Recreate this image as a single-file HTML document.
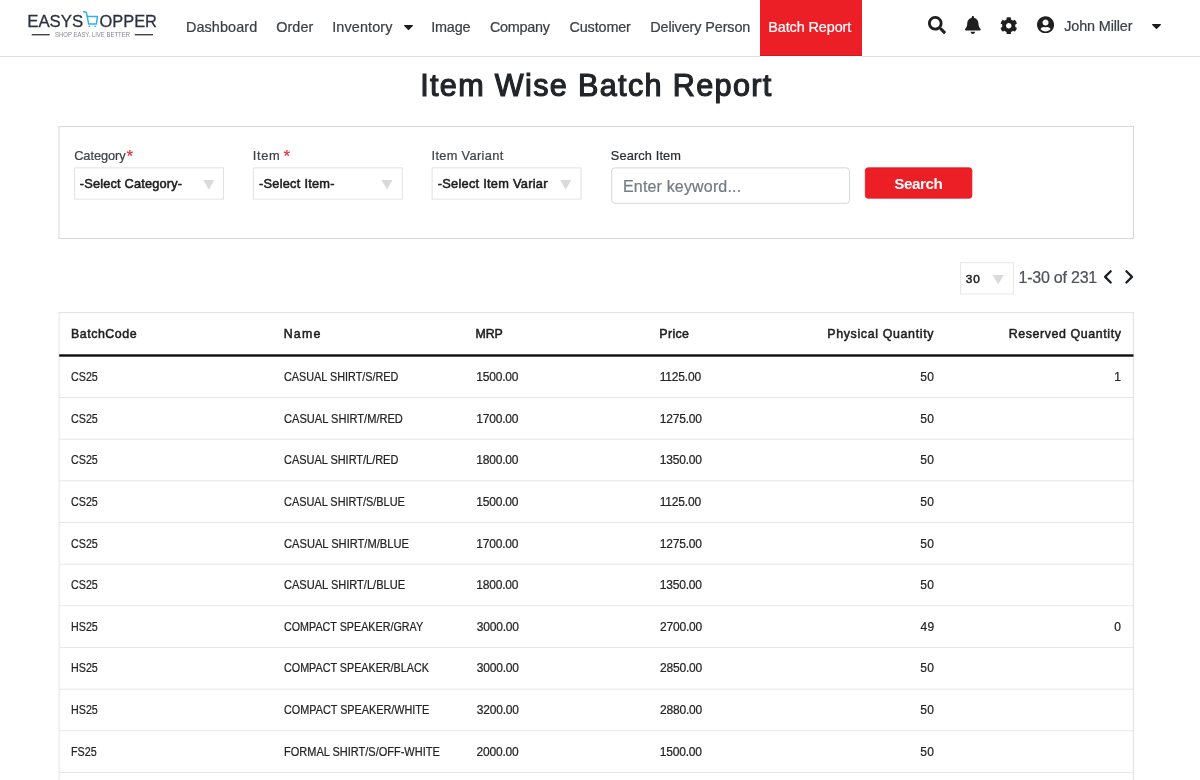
<!DOCTYPE html>
<html lang="en">
<head>
<meta charset="utf-8">
<title>Item Wise Batch Report</title>
<style>
*{box-sizing:border-box;margin:0;padding:0}
html,body{width:1200px;height:780px;overflow:hidden;background:#fff}
body{font-family:"Liberation Sans", sans-serif;color:#212529;position:relative}
.t{position:absolute;white-space:nowrap}
.a{position:absolute}
</style>
</head>
<body>
<div id="page" style="position:absolute;left:0;top:0;width:1200px;height:780px;will-change:transform">
<svg class="a" style="left:0;top:0" width="1200" height="780" viewBox="0 0 1200 780">
<rect x="0.00" y="56.00" width="760.00" height="0.90" fill="#d9dbdf"/>
<rect x="862.00" y="56.00" width="338.00" height="0.90" fill="#d9dbdf"/>
<rect x="760.00" y="0.00" width="102.00" height="56.00" fill="#ec1f27"/>
<rect x="760.00" y="55.10" width="102.00" height="0.90" fill="#cf1b22"/>
<rect x="59.00" y="126.50" width="1074.50" height="112.00" rx="0" fill="#fff" stroke="#d6d6d6" stroke-width="1"/>
<rect x="74.60" y="167.90" width="148.90" height="31.20" rx="0" fill="#fff" stroke="#dedede" stroke-width="0.9"/>
<path d="M203.30 180 h11 l-5.5 9.6z" fill="#d9d9d9"/>
<rect x="253.35" y="167.90" width="148.90" height="31.20" rx="0" fill="#fff" stroke="#dedede" stroke-width="0.9"/>
<path d="M381.45 180 h11 l-5.5 9.6z" fill="#d9d9d9"/>
<rect x="432.10" y="167.90" width="148.90" height="31.20" rx="0" fill="#fff" stroke="#dedede" stroke-width="0.9"/>
<path d="M560.20 180 h11 l-5.5 9.6z" fill="#d9d9d9"/>
<rect x="611.70" y="167.90" width="237.80" height="35.40" rx="3.2" fill="#fff" stroke="#cdd1d6" stroke-width="0.9"/>
<rect x="865.3" y="167.8" width="106.6" height="30.4" rx="2.8" fill="#ec1f27" stroke="#dc1c24" stroke-width=".8"/>
<rect x="960.60" y="262.70" width="52.70" height="31.20" rx="0" fill="#fff" stroke="#e5e5e5" stroke-width="0.9"/>
<path d="M992.5 275.1 h11.4 l-5.7 9.2z" fill="#dadada"/>
<g fill="none" stroke="#1b1f24" stroke-width="2.3" stroke-linecap="round" stroke-linejoin="round"><path d="M1110.7 271.3 L1105.1 276.9 L1110.7 282.5"/><path d="M1126.4 271.3 L1132 276.9 L1126.4 282.5"/></g>
<rect x="58.60" y="312.20" width="1075.10" height="0.90" fill="#dddddd"/>
<rect x="58.60" y="312.20" width="0.90" height="467.80" fill="#e0e0e0"/>
<rect x="1132.90" y="312.20" width="0.90" height="467.80" fill="#dcdcdc"/>
<rect x="59.20" y="354.30" width="1074.30" height="2.40" fill="#0d0d0d"/>
<rect x="59.50" y="397.08" width="1073.50" height="0.85" fill="#e1e3e6"/>
<rect x="59.50" y="438.74" width="1073.50" height="0.85" fill="#e1e3e6"/>
<rect x="59.50" y="480.40" width="1073.50" height="0.85" fill="#e1e3e6"/>
<rect x="59.50" y="522.06" width="1073.50" height="0.85" fill="#e1e3e6"/>
<rect x="59.50" y="563.72" width="1073.50" height="0.85" fill="#e1e3e6"/>
<rect x="59.50" y="605.38" width="1073.50" height="0.85" fill="#e1e3e6"/>
<rect x="59.50" y="647.04" width="1073.50" height="0.85" fill="#e1e3e6"/>
<rect x="59.50" y="688.70" width="1073.50" height="0.85" fill="#e1e3e6"/>
<rect x="59.50" y="730.36" width="1073.50" height="0.85" fill="#e1e3e6"/>
<rect x="59.50" y="772.02" width="1073.50" height="0.85" fill="#e1e3e6"/>
</svg>
<svg class="a" style="left:0;top:0" width="170" height="50" viewBox="0 0 170 50">
<g font-family="Liberation Sans, sans-serif" font-size="17.1" fill="#2c3040" stroke="#2c3040" stroke-width=".28">
<text x="27.2" y="26.5" textLength="56" lengthAdjust="spacingAndGlyphs">EASYS</text>
<text x="99.4" y="26.5" textLength="57.6" lengthAdjust="spacingAndGlyphs">OPPER</text>
</g>
<path d="M83.5 11.7 L86.3 12.2 L88.7 24.1 L96.4 24.1 L97.4 16.6 L87.3 16.6" fill="none" stroke="#35b0e6" stroke-width="1.5" stroke-linecap="round" stroke-linejoin="round"/>
<circle cx="89.4" cy="26.3" r=".85" fill="#35b0e6"/><circle cx="95.2" cy="26.3" r=".85" fill="#35b0e6"/>
<rect x="31.7" y="34" width="18" height="1.4" fill="#3f4350"/>
<rect x="134.7" y="34" width="18.3" height="1.4" fill="#3f4350"/>
<text x="55" y="36.5" font-family="Liberation Sans, sans-serif" font-size="6.3" fill="#85888f" textLength="75" lengthAdjust="spacingAndGlyphs">SHOP EASY. LIVE BETTER</text>
</svg>
<svg class="a" style="left:928.2px;top:16.4px" width="17.9" height="17.9" viewBox="0 0 512 512"><path fill="#1f1f1f" d="M505 442.7L405.3 343c-4.500-4.500-10.600-7-17-7H372c27.600-35.300 44-79.700 44-128C416 93.100 322.900 0 208 0S0 93.100 0 208s93.100 208 208 208c48.300 0 92.700-16.400 128-44v16.300c0 6.400 2.500 12.500 7 17l99.700 99.700c9.400 9.400 24.600 9.400 33.900 0l28.300-28.300c9.400-9.400 9.400-24.600.1-34zM208 336c-70.700 0-128-57.200-128-128 0-70.700 57.200-128 128-128 70.700 0 128 57.200 128 128 0 70.700-57.200 128-128 128z"/></svg>
<svg class="a" style="left:965.1px;top:16.4px" width="15.7" height="17.9" viewBox="0 0 448 512"><path fill="#1f1f1f" d="M224 512c35.320 0 63.970-28.650 63.970-64H160.030c0 35.350 28.650 64 63.970 64zm215.390-149.710c-19.320-20.760-55.470-51.990-55.470-154.290 0-77.700-54.480-139.900-127.940-155.160V32c0-17.670-14.320-32-31.980-32s-31.980 14.330-31.980 32v20.840C118.560 68.100 64.080 130.300 64.080 208c0 102.300-36.150 133.530-55.470 154.290-6 6.450-8.660 14.160-8.610 21.710.11 16.400 12.980 32 32.100 32h383.800c19.120 0 32-15.600 32.100-32 .05-7.550-2.610-15.270-8.610-21.710z"/></svg>
<svg class="a" style="left:1000.1px;top:16.7px" width="17.5" height="17.5" viewBox="0 0 512 512"><path fill="#1f1f1f" d="M487.400 315.700l-42.600-24.600c4.300-23.200 4.300-47 0-70.200l42.600-24.600c4.900-2.800 7.100-8.600 5.500-14-11.100-35.600-30-67.800-54.700-94.600-3.800-4.100-10-5.100-14.800-2.300L380.800 110c-17.900-15.400-38.500-27.300-60.800-35.100V25.800c0-5.600-3.900-10.500-9.400-11.700-36.700-8.200-74.300-7.800-109.200 0-5.500 1.200-9.400 6.100-9.400 11.700V75c-22.200 7.900-42.800 19.800-60.800 35.100L88.700 85.500c-4.900-2.800-11-1.900-14.800 2.300-24.700 26.700-43.600 58.900-54.700 94.600-1.700 5.400.6 11.200 5.500 14L67.300 221c-4.300 23.200-4.300 47 0 70.200l-42.600 24.600c-4.900 2.800-7.100 8.600-5.500 14 11.100 35.600 30 67.800 54.700 94.600 3.800 4.100 10 5.100 14.800 2.300l42.600-24.600c17.900 15.400 38.500 27.300 60.800 35.100v49.200c0 5.600 3.900 10.500 9.400 11.700 36.700 8.200 74.300 7.800 109.200 0 5.500-1.200 9.400-6.100 9.400-11.700v-49.200c22.200-7.900 42.800-19.800 60.800-35.100l42.600 24.600c4.900 2.800 11 1.900 14.800-2.300 24.700-26.700 43.600-58.900 54.700-94.600 1.500-5.500-.7-11.300-5.600-14.100zM256 336c-44.100 0-80-35.900-80-80s35.900-80 80-80 80 35.900 80 80-35.900 80-80 80z"/></svg>
<svg class="a" style="left:1036.9px;top:15.6px" width="17.1" height="17.6" viewBox="0 0 496 512"><path fill="#1f1f1f" d="M248 8C111 8 0 119 0 256s111 248 248 248 248-111 248-248S385 8 248 8zm0 96c48.600 0 88 39.400 88 88s-39.400 88-88 88-88-39.400-88-88 39.400-88 88-88zm0 344c-58.700 0-111.300-26.600-146.500-68.200 18.800-35.400 55.600-59.800 98.500-59.800 2.400 0 4.800.4 7.100 1.100 13 4.200 26.600 6.900 40.900 6.900 14.300 0 28-2.700 40.900-6.900 2.300-.7 4.700-1.100 7.100-1.100 42.900 0 79.700 24.400 98.500 59.800C359.300 421.400 306.700 448 248 448z"/></svg>
<svg class="a" style="left:403.6px;top:24.7px" width="9" height="5" viewBox="0 0 9 5"><path fill="#1b1b1b" d="M0.6 0h7.800c.5 0 .8.6.4 1L5 4.700c-.3.3-.7.3-1 0L.2 1C-.2.600.100 0 .6 0z"/></svg>
<svg class="a" style="left:1151.8px;top:23.8px" width="9" height="5" viewBox="0 0 9 5"><path fill="#1b1b1b" d="M0.6 0h7.800c.5 0 .8.6.4 1L5 4.700c-.3.3-.7.3-1 0L.2 1C-.2.600.100 0 .6 0z"/></svg>

<div class="a" style="left:432.5px;top:169px;width:115.6px;height:29px;overflow:hidden"><div class="t" id="s3" style="left:5.25px;top:6px;font-size:12.8px;line-height:18px;-webkit-text-stroke:0.54px #1c1c1c;color:#1c1c1c;letter-spacing:0.259px">-Select Item Variant-</div></div>
<div class="t" id="n1" style="left:186.00px;top:17px;font-size:14.4px;line-height:20px;color:#3b4046;-webkit-text-stroke:0.22px #3b4046;letter-spacing:0.094px;">Dashboard</div>
<div class="t" id="n2" style="left:276.25px;top:17px;font-size:14.4px;line-height:20px;color:#3b4046;-webkit-text-stroke:0.22px #3b4046;letter-spacing:0.062px;">Order</div>
<div class="t" id="n3" style="left:332.25px;top:17px;font-size:14.4px;line-height:20px;color:#3b4046;-webkit-text-stroke:0.22px #3b4046;letter-spacing:0.125px;">Inventory</div>
<div class="t" id="n4" style="left:431.25px;top:17px;font-size:14.4px;line-height:20px;color:#3b4046;-webkit-text-stroke:0.22px #3b4046;letter-spacing:-0.188px;">Image</div>
<div class="t" id="n5" style="left:490.00px;top:17px;font-size:14.4px;line-height:20px;color:#3b4046;-webkit-text-stroke:0.22px #3b4046;letter-spacing:-0.292px;">Company</div>
<div class="t" id="n6" style="left:569.50px;top:17px;font-size:14.4px;line-height:20px;color:#3b4046;-webkit-text-stroke:0.22px #3b4046;letter-spacing:-0.143px;">Customer</div>
<div class="t" id="n7" style="left:650.25px;top:17px;font-size:14.4px;line-height:20px;color:#3b4046;-webkit-text-stroke:0.22px #3b4046;letter-spacing:-0.107px;">Delivery Person</div>
<div class="t" id="n8" style="left:768.25px;top:17px;font-size:14.4px;line-height:20px;color:#ffffff;-webkit-text-stroke:0.22px #ffffff;letter-spacing:-0.091px;">Batch Report</div>
<div class="t" id="n9" style="left:1064.25px;top:16px;font-size:14.4px;line-height:20px;color:#3b4046;-webkit-text-stroke:0.22px #3b4046;letter-spacing:-0.135px;">John Miller</div>
<div class="t" id="title" style="left:420.18px;top:63px;font-size:30.6px;line-height:43px;color:#212529;-webkit-text-stroke:1.15px #212529;letter-spacing:1.336px;transform:translateY(.5px);">Item Wise Batch Report</div>
<div class="t" id="l1" style="left:74.15px;top:147px;font-size:12.8px;line-height:18px;color:#3f4449;-webkit-text-stroke:0.22px #3f4449;letter-spacing:-0.057px;">Category</div>
<div class="t" id="l2" style="left:252.65px;top:147px;font-size:12.8px;line-height:18px;color:#3f4449;-webkit-text-stroke:0.22px #3f4449;letter-spacing:0.750px;">Item</div>
<div class="t" id="a1" style="left:126.60px;top:147px;font-size:17px;line-height:20px;color:#e2303a;-webkit-text-stroke:0.22px #e2303a;">*</div>
<div class="t" id="a2" style="left:283.60px;top:147px;font-size:17px;line-height:20px;color:#e2303a;-webkit-text-stroke:0.22px #e2303a;">*</div>
<div class="t" id="l3" style="left:431.50px;top:147px;font-size:12.8px;line-height:18px;color:#3f4449;-webkit-text-stroke:0.22px #3f4449;letter-spacing:0.336px;">Item Variant</div>
<div class="t" id="l4" style="left:610.75px;top:147px;font-size:12.8px;line-height:18px;color:#2a2d31;-webkit-text-stroke:0.22px #2a2d31;letter-spacing:0.125px;">Search Item</div>
<div class="t" id="s1" style="left:79.75px;top:175px;font-size:12.8px;line-height:18px;color:#1c1c1c;-webkit-text-stroke:0.54px #1c1c1c;letter-spacing:0.169px;">-Select Category-</div>
<div class="t" id="s2" style="left:259.00px;top:175px;font-size:12.8px;line-height:18px;color:#1c1c1c;-webkit-text-stroke:0.54px #1c1c1c;letter-spacing:0.250px;">-Select Item-</div>
<div class="t" id="ph" style="left:623.00px;top:176px;font-size:16px;line-height:22px;color:#757b82;-webkit-text-stroke:0.22px #757b82;letter-spacing:0.167px;">Enter keyword...</div>
<div class="t" id="btn" style="left:894.25px;top:173px;font-size:15.2px;line-height:21px;color:#ffffff;font-weight:bold;letter-spacing:-0.450px;">Search</div>
<div class="t" id="p30" style="left:965.75px;top:271px;font-size:11.8px;line-height:17px;color:#1c1c1c;-webkit-text-stroke:0.50px #1c1c1c;letter-spacing:0.900px;">30</div>
<div class="t" id="pg" style="left:1018.50px;top:267px;font-size:16px;line-height:22px;color:#4d5258;-webkit-text-stroke:0.22px #4d5258;letter-spacing:-0.225px;">1-30 of 231</div>
<div class="t" id="h1" style="left:71.00px;top:326px;font-size:12.4px;line-height:17px;color:#1f1f1f;-webkit-text-stroke:0.52px #1f1f1f;letter-spacing:0.531px;">BatchCode</div>
<div class="t" id="h2" style="left:283.75px;top:326px;font-size:12.4px;line-height:17px;color:#1f1f1f;-webkit-text-stroke:0.52px #1f1f1f;letter-spacing:1.167px;">Name</div>
<div class="t" id="h3" style="left:475.50px;top:326px;font-size:12.4px;line-height:17px;color:#1f1f1f;-webkit-text-stroke:0.52px #1f1f1f;letter-spacing:-0.125px;">MRP</div>
<div class="t" id="h4" style="left:659.25px;top:326px;font-size:12.4px;line-height:17px;color:#1f1f1f;-webkit-text-stroke:0.52px #1f1f1f;letter-spacing:0.375px;">Price</div>
<div class="t" id="h5" style="left:827.25px;top:326px;font-size:12.4px;line-height:17px;color:#1f1f1f;-webkit-text-stroke:0.52px #1f1f1f;letter-spacing:0.656px;">Physical Quantity</div>
<div class="t" id="h6" style="left:1008.75px;top:326px;font-size:12.4px;line-height:17px;color:#1f1f1f;-webkit-text-stroke:0.52px #1f1f1f;letter-spacing:0.594px;">Reserved Quantity</div>
<div class="t" id="r0a" style="left:70.75px;top:369px;font-size:12px;line-height:17px;color:#242424;-webkit-text-stroke:0.22px #242424;transform:scaleX(0.8934);transform-origin:0 0;">CS25</div>
<div class="t" id="r0b" style="left:283.50px;top:369px;font-size:12px;line-height:17px;color:#242424;-webkit-text-stroke:0.22px #242424;transform:scaleX(0.9026);transform-origin:0 0;">CASUAL SHIRT/S/RED</div>
<div class="t" id="r0c" style="left:476.25px;top:369px;font-size:12px;line-height:17px;color:#242424;-webkit-text-stroke:0.22px #242424;letter-spacing:-0.182px;">1500.00</div>
<div class="t" id="r0d" style="left:659.75px;top:369px;font-size:12px;line-height:17px;color:#242424;-webkit-text-stroke:0.22px #242424;letter-spacing:-0.182px;">1125.00</div>
<div class="t" id="r0e" style="left:920.25px;top:369px;font-size:12px;line-height:17px;color:#242424;-webkit-text-stroke:0.22px #242424;letter-spacing:0.400px;">50</div>
<div class="t" id="r0f" style="left:1114.25px;top:369px;font-size:12px;line-height:17px;color:#242424;-webkit-text-stroke:0.22px #242424;letter-spacing:-0.182px;">1</div>
<div class="t" id="r1a" style="left:70.75px;top:411px;font-size:12px;line-height:17px;color:#242424;-webkit-text-stroke:0.22px #242424;transform:scaleX(0.8934);transform-origin:0 0;">CS25</div>
<div class="t" id="r1b" style="left:283.50px;top:411px;font-size:12px;line-height:17px;color:#242424;-webkit-text-stroke:0.22px #242424;transform:scaleX(0.9237);transform-origin:0 0;">CASUAL SHIRT/M/RED</div>
<div class="t" id="r1c" style="left:476.25px;top:411px;font-size:12px;line-height:17px;color:#242424;-webkit-text-stroke:0.22px #242424;letter-spacing:-0.182px;">1700.00</div>
<div class="t" id="r1d" style="left:659.75px;top:411px;font-size:12px;line-height:17px;color:#242424;-webkit-text-stroke:0.22px #242424;letter-spacing:-0.182px;">1275.00</div>
<div class="t" id="r1e" style="left:920.25px;top:411px;font-size:12px;line-height:17px;color:#242424;-webkit-text-stroke:0.22px #242424;letter-spacing:0.400px;">50</div>
<div class="t" id="r2a" style="left:70.75px;top:452px;font-size:12px;line-height:17px;color:#242424;-webkit-text-stroke:0.22px #242424;transform:scaleX(0.8934);transform-origin:0 0;">CS25</div>
<div class="t" id="r2b" style="left:283.50px;top:452px;font-size:12px;line-height:17px;color:#242424;-webkit-text-stroke:0.22px #242424;transform:scaleX(0.9117);transform-origin:0 0;">CASUAL SHIRT/L/RED</div>
<div class="t" id="r2c" style="left:476.25px;top:452px;font-size:12px;line-height:17px;color:#242424;-webkit-text-stroke:0.22px #242424;letter-spacing:-0.182px;">1800.00</div>
<div class="t" id="r2d" style="left:659.75px;top:452px;font-size:12px;line-height:17px;color:#242424;-webkit-text-stroke:0.22px #242424;letter-spacing:-0.182px;">1350.00</div>
<div class="t" id="r2e" style="left:920.25px;top:452px;font-size:12px;line-height:17px;color:#242424;-webkit-text-stroke:0.22px #242424;letter-spacing:0.400px;">50</div>
<div class="t" id="r3a" style="left:70.75px;top:494px;font-size:12px;line-height:17px;color:#242424;-webkit-text-stroke:0.22px #242424;transform:scaleX(0.8934);transform-origin:0 0;">CS25</div>
<div class="t" id="r3b" style="left:283.50px;top:494px;font-size:12px;line-height:17px;color:#242424;-webkit-text-stroke:0.22px #242424;transform:scaleX(0.9105);transform-origin:0 0;">CASUAL SHIRT/S/BLUE</div>
<div class="t" id="r3c" style="left:476.25px;top:494px;font-size:12px;line-height:17px;color:#242424;-webkit-text-stroke:0.22px #242424;letter-spacing:-0.182px;">1500.00</div>
<div class="t" id="r3d" style="left:659.75px;top:494px;font-size:12px;line-height:17px;color:#242424;-webkit-text-stroke:0.22px #242424;letter-spacing:-0.182px;">1125.00</div>
<div class="t" id="r3e" style="left:920.25px;top:494px;font-size:12px;line-height:17px;color:#242424;-webkit-text-stroke:0.22px #242424;letter-spacing:0.400px;">50</div>
<div class="t" id="r4a" style="left:70.75px;top:536px;font-size:12px;line-height:17px;color:#242424;-webkit-text-stroke:0.22px #242424;transform:scaleX(0.8934);transform-origin:0 0;">CS25</div>
<div class="t" id="r4b" style="left:283.50px;top:536px;font-size:12px;line-height:17px;color:#242424;-webkit-text-stroke:0.22px #242424;transform:scaleX(0.9271);transform-origin:0 0;">CASUAL SHIRT/M/BLUE</div>
<div class="t" id="r4c" style="left:476.25px;top:536px;font-size:12px;line-height:17px;color:#242424;-webkit-text-stroke:0.22px #242424;letter-spacing:-0.182px;">1700.00</div>
<div class="t" id="r4d" style="left:659.75px;top:536px;font-size:12px;line-height:17px;color:#242424;-webkit-text-stroke:0.22px #242424;letter-spacing:-0.182px;">1275.00</div>
<div class="t" id="r4e" style="left:920.25px;top:536px;font-size:12px;line-height:17px;color:#242424;-webkit-text-stroke:0.22px #242424;letter-spacing:0.400px;">50</div>
<div class="t" id="r5a" style="left:70.75px;top:577px;font-size:12px;line-height:17px;color:#242424;-webkit-text-stroke:0.22px #242424;transform:scaleX(0.8934);transform-origin:0 0;">CS25</div>
<div class="t" id="r5b" style="left:283.50px;top:577px;font-size:12px;line-height:17px;color:#242424;-webkit-text-stroke:0.22px #242424;transform:scaleX(0.9211);transform-origin:0 0;">CASUAL SHIRT/L/BLUE</div>
<div class="t" id="r5c" style="left:476.25px;top:577px;font-size:12px;line-height:17px;color:#242424;-webkit-text-stroke:0.22px #242424;letter-spacing:-0.182px;">1800.00</div>
<div class="t" id="r5d" style="left:659.75px;top:577px;font-size:12px;line-height:17px;color:#242424;-webkit-text-stroke:0.22px #242424;letter-spacing:-0.182px;">1350.00</div>
<div class="t" id="r5e" style="left:920.25px;top:577px;font-size:12px;line-height:17px;color:#242424;-webkit-text-stroke:0.22px #242424;letter-spacing:0.400px;">50</div>
<div class="t" id="r6a" style="left:70.75px;top:619px;font-size:12px;line-height:17px;color:#242424;-webkit-text-stroke:0.22px #242424;transform:scaleX(0.8934);transform-origin:0 0;">HS25</div>
<div class="t" id="r6b" style="left:283.50px;top:619px;font-size:12px;line-height:17px;color:#242424;-webkit-text-stroke:0.22px #242424;transform:scaleX(0.8950);transform-origin:0 0;">COMPACT SPEAKER/GRAY</div>
<div class="t" id="r6c" style="left:476.75px;top:619px;font-size:12px;line-height:17px;color:#242424;-webkit-text-stroke:0.22px #242424;letter-spacing:-0.182px;">3000.00</div>
<div class="t" id="r6d" style="left:660.00px;top:619px;font-size:12px;line-height:17px;color:#242424;-webkit-text-stroke:0.22px #242424;letter-spacing:-0.182px;">2700.00</div>
<div class="t" id="r6e" style="left:920.50px;top:619px;font-size:12px;line-height:17px;color:#242424;-webkit-text-stroke:0.22px #242424;letter-spacing:0.400px;">49</div>
<div class="t" id="r6f" style="left:1114.25px;top:619px;font-size:12px;line-height:17px;color:#242424;-webkit-text-stroke:0.22px #242424;letter-spacing:-0.182px;">0</div>
<div class="t" id="r7a" style="left:70.75px;top:660px;font-size:12px;line-height:17px;color:#242424;-webkit-text-stroke:0.22px #242424;transform:scaleX(0.8934);transform-origin:0 0;">HS25</div>
<div class="t" id="r7b" style="left:283.50px;top:660px;font-size:12px;line-height:17px;color:#242424;-webkit-text-stroke:0.22px #242424;transform:scaleX(0.8966);transform-origin:0 0;">COMPACT SPEAKER/BLACK</div>
<div class="t" id="r7c" style="left:476.75px;top:660px;font-size:12px;line-height:17px;color:#242424;-webkit-text-stroke:0.22px #242424;letter-spacing:-0.182px;">3000.00</div>
<div class="t" id="r7d" style="left:660.00px;top:660px;font-size:12px;line-height:17px;color:#242424;-webkit-text-stroke:0.22px #242424;letter-spacing:-0.182px;">2850.00</div>
<div class="t" id="r7e" style="left:920.25px;top:660px;font-size:12px;line-height:17px;color:#242424;-webkit-text-stroke:0.22px #242424;letter-spacing:0.400px;">50</div>
<div class="t" id="r8a" style="left:70.75px;top:702px;font-size:12px;line-height:17px;color:#242424;-webkit-text-stroke:0.22px #242424;transform:scaleX(0.8934);transform-origin:0 0;">HS25</div>
<div class="t" id="r8b" style="left:283.50px;top:702px;font-size:12px;line-height:17px;color:#242424;-webkit-text-stroke:0.22px #242424;transform:scaleX(0.9022);transform-origin:0 0;">COMPACT SPEAKER/WHITE</div>
<div class="t" id="r8c" style="left:476.75px;top:702px;font-size:12px;line-height:17px;color:#242424;-webkit-text-stroke:0.22px #242424;letter-spacing:-0.182px;">3200.00</div>
<div class="t" id="r8d" style="left:660.00px;top:702px;font-size:12px;line-height:17px;color:#242424;-webkit-text-stroke:0.22px #242424;letter-spacing:-0.182px;">2880.00</div>
<div class="t" id="r8e" style="left:920.25px;top:702px;font-size:12px;line-height:17px;color:#242424;-webkit-text-stroke:0.22px #242424;letter-spacing:0.400px;">50</div>
<div class="t" id="r9a" style="left:70.75px;top:744px;font-size:12px;line-height:17px;color:#242424;-webkit-text-stroke:0.22px #242424;transform:scaleX(0.8934);transform-origin:0 0;">FS25</div>
<div class="t" id="r9b" style="left:283.50px;top:744px;font-size:12px;line-height:17px;color:#242424;-webkit-text-stroke:0.22px #242424;transform:scaleX(0.9165);transform-origin:0 0;">FORMAL SHIRT/S/OFF-WHITE</div>
<div class="t" id="r9c" style="left:476.50px;top:744px;font-size:12px;line-height:17px;color:#242424;-webkit-text-stroke:0.22px #242424;letter-spacing:-0.182px;">2000.00</div>
<div class="t" id="r9d" style="left:659.75px;top:744px;font-size:12px;line-height:17px;color:#242424;-webkit-text-stroke:0.22px #242424;letter-spacing:-0.182px;">1500.00</div>
<div class="t" id="r9e" style="left:920.25px;top:744px;font-size:12px;line-height:17px;color:#242424;-webkit-text-stroke:0.22px #242424;letter-spacing:0.400px;">50</div>
</div>
</body>
</html>
